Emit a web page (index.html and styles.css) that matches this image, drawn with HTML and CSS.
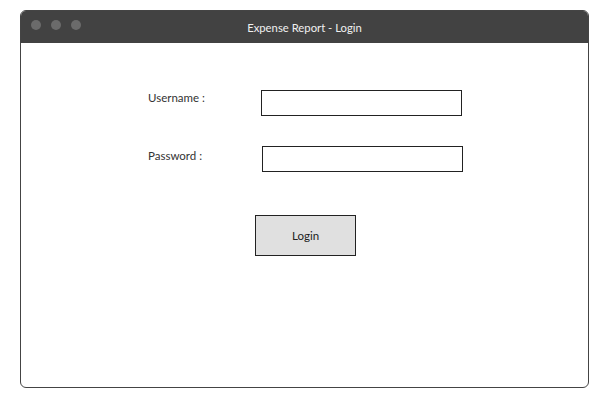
FILE: index.html
```html
<!DOCTYPE html>
<html lang="en">
<head>
  <meta charset="UTF-8">
  <meta name="viewport" content="width=device-width, initial-scale=1.0">
  <title>Expense Report - Login</title>
  <link rel="stylesheet" href="styles.css">
</head>
<body>

  <div class="janela">
    <div class="barra-titulo">
      <div class="botoes">
        <span class="bolinha"></span>
        <span class="bolinha"></span>
        <span class="bolinha"></span>
      </div>
      <div class="titulo">Expense Report - Login</div>
    </div>

    <div class="conteudo">
      <div class="linha">
        <label class="rotulo" for="usuario">Username :</label>
        <input class="campo" id="usuario" type="text">
      </div>
      <div class="linha">
        <label class="rotulo rotulo-senha" for="senha">Password :</label>
        <input class="campo campo-senha" id="senha" type="password">
      </div>
      <button class="botao-login">Login</button>
    </div>
  </div>

</body>
</html>
```

FILE: styles.css
```css
body {
  margin: 0;
  padding: 10px 14px 14px 20px;
  background: #ffffff;
  font-family: 'Lato', 'Open Sans', sans-serif;
}

.janela {
  width: 567px;
  height: 376px;
  border: 1px solid #444;
  border-radius: 6px;
  overflow: hidden;
  background: #fff;
}

.barra-titulo {
  position: relative;
  height: 32px;
  background-color: #424242;
  display: flex;
  align-items: center;
  justify-content: center;
}

.botoes {
  position: absolute;
  left: 10px;
  top: 9px;
  display: flex;
  gap: 10px;
}

.bolinha {
  width: 10px;
  height: 10px;
  border-radius: 50%;
  background-color: #6b6b6b;
}

.titulo {
  color: #f0f0f0;
  font-size: 11.3px;
}

.conteudo {
  padding: 47px 0 0 127px;
}

.linha {
  display: flex;
  align-items: flex-start;
  margin-bottom: 30px;
}

.rotulo {
  width: 113px;
  font-size: 11.5px;
  line-height: 16px;
  color: #333;
}

.rotulo-senha {
  padding-top: 2px;
}

.campo {
  box-sizing: border-box;
  width: 201px;
  height: 26px;
  margin: 0;
  border: 1px solid #222;
  border-radius: 0;
  padding: 0 4px;
  background: #fff;
}

.campo-senha {
  margin-left: 1px;
}

.botao-login {
  display: block;
  box-sizing: border-box;
  width: 101px;
  height: 41px;
  margin: 43px 0 0 107px;
  border: 1px solid #222;
  background-color: #e0e0e0;
  font-family: inherit;
  font-size: 11.5px;
  color: #222;
  cursor: pointer;
}
```
